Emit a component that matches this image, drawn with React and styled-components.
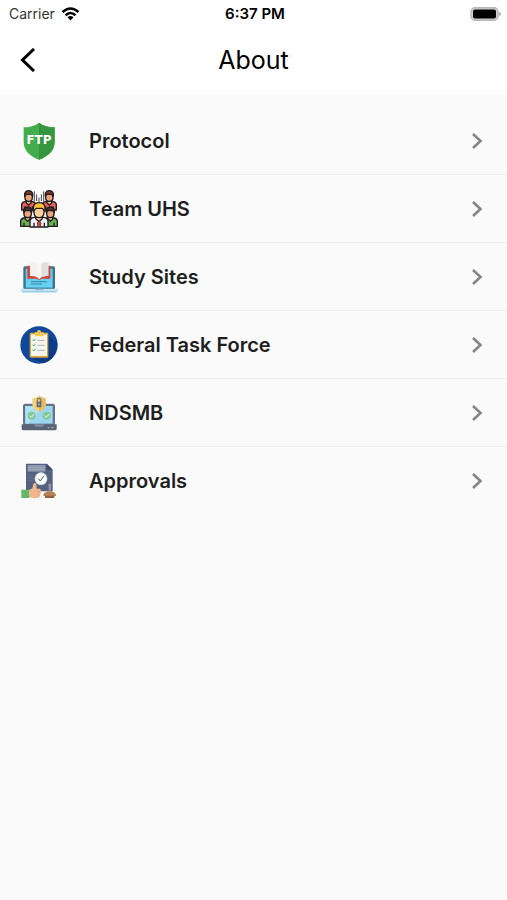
import React from 'react';
import styled, { createGlobalStyle } from 'styled-components';

const GlobalStyle = createGlobalStyle`
  * {
    box-sizing: border-box;
  }
  body {
    margin: 0;
    background-color: #fafafa;
    font-family: Inter, "Liberation Sans", sans-serif;
    color: #1e1e1e;
  }
`;

const Top = styled.header`
  background-color: #fff;
  color: #000;
`;

const StatusBar = styled.div`
  display: grid;
  grid-template-columns: 1fr auto 1fr;
  align-items: center;
  height: 28px;
  padding: 0 6px 0 9px;
  font-size: 14px;
  line-height: 20px;
`;

const Carrier = styled.div`
  display: flex;
  align-items: center;
  gap: 6px;
  color: #333;
  svg {
    width: 19px;
    height: 14px;
  }
`;

const Time = styled.time`
  font-size: 15px;
  font-weight: 600;
`;

const Battery = styled.svg`
  justify-self: end;
  width: 31px;
  height: 14px;
`;

const NavBar = styled.nav`
  display: grid;
  grid-template-columns: 56px 1fr 56px;
  align-items: center;
  height: 66px;
  padding-bottom: 3px;
  h1 {
    margin: 0;
    font-size: 25px;
    font-weight: 400;
    line-height: 32px;
    text-align: center;
  }
`;

const BackButton = styled.button`
  display: flex;
  align-items: center;
  height: 48px;
  padding: 0 20px;
  border: none;
  background: none;
  color: #000;
  cursor: pointer;
  svg {
    width: 16px;
    height: 24px;
  }
`;

const Menu = styled.ul`
  margin: 0;
  padding: 13px 0 0;
  list-style: none;
  li {
    display: flex;
    height: 68px;
    border-bottom: 1px solid #eee;
  }
  li:last-child {
    border-bottom-color: transparent;
  }
`;

const MenuLink = styled.a`
  display: flex;
  flex: 1;
  align-items: center;
  padding: 0 24px 0 20px;
  color: inherit;
  font-size: 20px;
  font-weight: 600;
  line-height: 28px;
  text-decoration: none;
  span {
    flex: 1;
    margin-left: 31px;
  }
`;

const Icon = styled.svg`
  width: 38px;
  height: 38px;
`;

const Chevron = styled.svg`
  width: 12px;
  height: 18px;
`;

function ProtocolIcon() {
  return (
    <Icon viewBox="18 15 114 114" aria-hidden="true">
      <path d="M75 17C62 27 45 31 29 31v43c0 28 20 44 46 54 26-10 47-26 47-54V31c-17 0-34-4-47-14z" fill="#43ad4c" />
      <path d="M75 17c13 10 30 14 47 14v43c0 28-21 44-47 54z" fill="#35963f" />
      <text x="75" y="82" textAnchor="middle" fontFamily="DejaVu Sans, sans-serif" fontWeight="700" fontSize="36" fill="#fff">FTP</text>
    </Icon>
  );
}

function Person({ x, y, hair, shirt }) {
  return (
    <g transform={`translate(${x} ${y})`} stroke="#211d20" strokeWidth="4" strokeLinejoin="round">
      <path d="M-21 45V30q0-8 9-10h24q9 2 9 10v15z" fill={shirt} />
      <path d="M-7 17v7l7 6 7-6v-7z" fill="#f3b98a" />
      <path d="M-11 0q0-10 11-10T11 0v8q0 11-11 11T-11 8z" fill="#e9a478" />
      <path d="M-12 4v-7q2-10 12-10t12 10v7l-5-6H-7z" fill={hair} />
      <path d="M-11 34v11M11 34v11" fill="none" />
    </g>
  );
}

function TeamIcon() {
  return (
    <Icon viewBox="18 15 114 114" aria-hidden="true">
      <path d="M61 19v30M68 28v20M82 28v20M89 19v30M75 38v14" stroke="#44444c" strokeWidth="3" />
      <Person x={44} y={30} hair="#7a3d22" shirt="#ed625c" />
      <Person x={106} y={30} hair="#7a3d22" shirt="#ed625c" />
      <Person x={41} y={79} hair="#493029" shirt="#6db052" />
      <Person x={109} y={79} hair="#493029" shirt="#6db052" />
      <g stroke="#211d20" strokeWidth="4" strokeLinejoin="round">
        <path d="M48 126v-17q0-9 12-12h30q12 3 12 12v17z" fill="#eef1f7" />
        <path d="M65 93v8l10 9 10-9v-8z" fill="#ffcb9b" />
        <path d="M60 72q0-8 15-8t15 8v9q0 17-15 17T60 81z" fill="#ffcf9d" />
        <path d="M58 79V67q2-14 18-14 15 0 17 14v12l-8-9H66z" fill="#f9c63d" />
        <path d="M75 107l-5 7 2 12h7l2-12z" fill="#df4348" strokeWidth="2" />
        <path d="M60 113v13M91 113v13" fill="none" />
      </g>
    </Icon>
  );
}

function StudyIcon() {
  return (
    <Icon viewBox="18 15 114 114" aria-hidden="true">
      <rect x="28" y="40" width="95" height="69" rx="5" fill="#3b718c" />
      <path d="M35 47h81v57H35z" fill="#65d0ef" />
      <path d="M40 38h69v39H83l-8 4-8-4H40z" fill="#d64339" />
      <path d="M48 28q18-2 27 10 9-12 28-10v41q-18-2-28 9-9-11-27-9z" fill="#f3f1ee" />
      <path d="M75 38q9-12 28-10v41q-18-2-28 9z" fill="#dedfdf" />
      <path d="M68 34l14-9v43l-7 10z" fill="#f8f7f4" />
      <path d="M51 86h47M51 93h33" stroke="#3787a4" strokeWidth="3" />
      <path d="M20 107h112v6q-2 6-9 6H29q-7 0-9-6z" fill="#c4e5f4" />
      <path d="M62 107h28l-3 5H65z" fill="#86bad0" />
      <path d="M25 116h102" stroke="#91c8df" strokeWidth="3" />
    </Icon>
  );
}

function TaskForceIcon() {
  return (
    <Icon viewBox="18 15 114 114" aria-hidden="true">
      <circle cx="75" cy="72" r="56" fill="#11489b" />
      <path d="M99 38l31 29c2 27-17 53-41 60l-39-17z" fill="#0d3b84" />
      <rect x="47" y="35" width="56" height="75" rx="4" fill="#d9a43c" />
      <path d="M51 40h48v65H51z" fill="#f4f5ef" />
      <path d="M62 34h7q0-7 6-7t6 7h8v12H62z" fill="#f4cd4f" />
      <circle cx="75" cy="35" r="2" fill="#b98728" />
      <path d="M56 56l3 4 6-7M56 71l3 4 6-7M56 86l3 4 6-7" fill="none" stroke="#4bae66" strokeWidth="3" />
      <path d="M70 58h22M70 73h22M70 88h22" stroke="#aab5bc" strokeWidth="3" />
    </Icon>
  );
}

function NdsmbIcon() {
  return (
    <Icon viewBox="18 15 114 114" aria-hidden="true">
      <rect x="27" y="44" width="96" height="65" rx="7" fill="#687284" />
      <path d="M34 51h82v53H34z" fill="#9bd7f2" />
      <path d="M34 51h52l-43 53h-9z" fill="#ade2f7" />
      <path d="M75 20q8 7 20 8v19q0 14-20 21-20-7-20-21V28q12-1 20-8z" fill="#f2d17d" />
      <path d="M75 20q8 7 20 8v19q0 14-20 21z" fill="#e9bc5e" />
      <path d="M70 40v-7q0-5 5-5t5 5v7" fill="none" stroke="#737984" strokeWidth="4" />
      <rect x="68" y="38" width="14" height="17" rx="2" fill="#626a79" />
      <path d="M75 43v6" stroke="#e9d7a1" strokeWidth="3" />
      <circle cx="53" cy="80" r="12" fill="#83c992" />
      <circle cx="98" cy="80" r="12" fill="#83c992" />
      <path d="M47 80l5 5 8-10M92 80l5 5 8-10" fill="none" stroke="#eefbed" strokeWidth="3" />
      <path d="M23 106h105v13q0 5-6 5H29q-6 0-6-5z" fill="#5b6475" />
      <path d="M60 106h31l-4 7H64z" fill="#81899b" />
      <path d="M101 116h5M111 116h8" stroke="#adb6c1" strokeWidth="3" />
    </Icon>
  );
}

function ApprovalsIcon() {
  return (
    <Icon viewBox="18 15 114 114" aria-hidden="true">
      <path d="M36 20h62l18 18v65H36z" fill="#56617f" />
      <path d="M98 20l18 18H98z" fill="#3c4866" />
      <path d="M41 24h53v20H41z" fill="#8d97ac" />
      <path d="M41 31h53M41 38h53" stroke="#aab3c3" strokeWidth="2" />
      <path d="M42 54h18M42 62h16M42 70h16" stroke="#65718f" strokeWidth="3" />
      <circle cx="81" cy="65" r="19" fill="#dce7ee" />
      <circle cx="81" cy="65" r="16" fill="#fbfdfd" />
      <path d="M73 65l6 7 10-15" fill="none" stroke="#56647e" strokeWidth="3" />
      <path d="M22 98h25v25H22z" fill="#65b867" />
      <path d="M45 99l10-5 3-14q5-5 9 1l1 14h10q5 4 2 9 3 5-1 8-1 10-8 11H57l-12-3z" fill="#f2b58e" />
      <path d="M68 104h10M68 113h9" stroke="#d99574" strokeWidth="2" />
      <path d="M103 82q5-5 9 0l-2 22h-5z" fill="#8c96a7" />
      <path d="M88 114q1-7 14-11h10q13 4 14 11v3H88z" fill="#b98154" />
      <path d="M93 116h28v7H93z" fill="#91613e" />
    </Icon>
  );
}

const items = [
  { label: 'Protocol', icon: ProtocolIcon },
  { label: 'Team UHS', icon: TeamIcon },
  { label: 'Study Sites', icon: StudyIcon },
  { label: 'Federal Task Force', icon: TaskForceIcon },
  { label: 'NDSMB', icon: NdsmbIcon },
  { label: 'Approvals', icon: ApprovalsIcon }
];

function App() {
  return (
    <>
      <GlobalStyle />
      <Top>
        <StatusBar>
          <Carrier>
            Carrier
            <svg viewBox="0 0 18 14" fill="none" stroke="#000" strokeWidth="2.6" aria-hidden="true">
              <path d="M1 5Q9-2 17 5M4 8.2q5-4.4 10 0" />
              <path d="M9 13.5l-3-3.2q3-2.4 6 0z" fill="#000" stroke="none" />
            </svg>
          </Carrier>
          <Time>6:37 PM</Time>
          <Battery viewBox="0 0 31 14" aria-hidden="true">
            <rect x="1" y="0.8" width="27" height="12.4" rx="4" fill="#d0d0d0" stroke="#b8b8b8" strokeWidth="1.5" />
            <rect x="3" y="2.5" width="23" height="9" rx="2" fill="#000" />
            <path d="M29 5q2 .5 2 2t-2 2z" fill="#aaa" />
          </Battery>
        </StatusBar>
        <NavBar>
          <BackButton type="button" aria-label="Back">
            <svg viewBox="0 0 16 24" fill="none" stroke="currentColor" strokeWidth="3">
              <path d="M14 1L2.5 12 14 23" />
            </svg>
          </BackButton>
          <h1>About</h1>
        </NavBar>
      </Top>
      <main>
        <Menu>
          {items.map(({ label, icon: ItemIcon }) => (
            <li key={label}>
              <MenuLink href="#">
                <ItemIcon />
                <span>{label}</span>
                <Chevron viewBox="0 0 12 18" fill="none" stroke="#858585" strokeWidth="2.6" aria-hidden="true">
                  <path d="M2 2l7.5 7L2 16" />
                </Chevron>
              </MenuLink>
            </li>
          ))}
        </Menu>
      </main>
    </>
  );
}

export default App;
